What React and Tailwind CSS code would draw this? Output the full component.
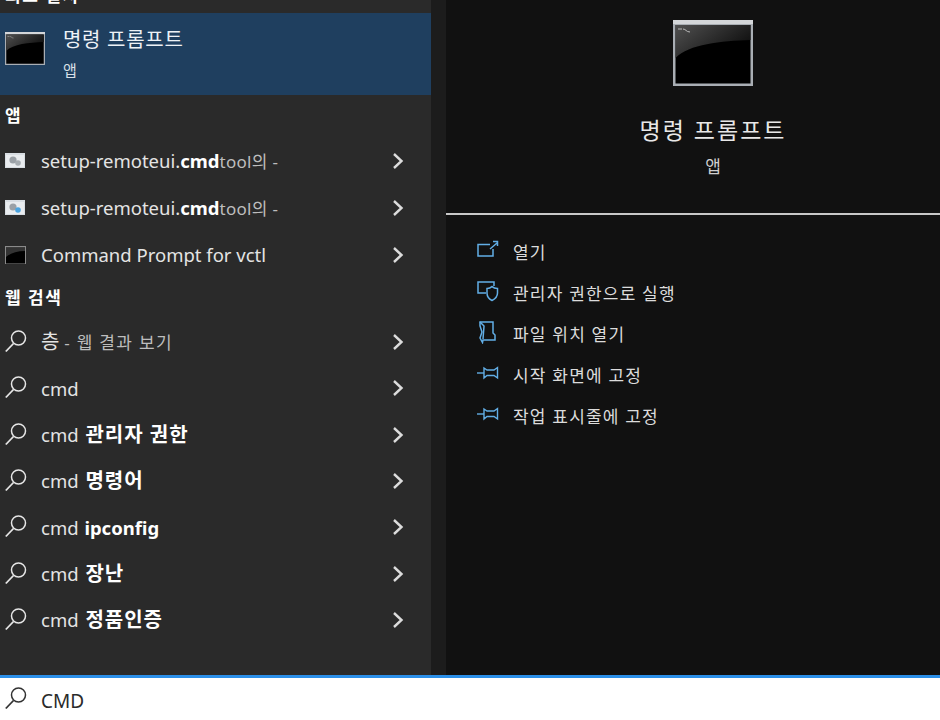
// Windows search panel for "CMD"
const fontStack = { fontFamily: '"Noto Sans", "Noto Sans CJK KR", sans-serif' };

function SearchIcon({ className = 'text-[#e6e6e6]' }) {
    return (
        <svg className={className} width="24" height="24" viewBox="0 0 24 24" fill="none" stroke="currentColor" strokeWidth="1.5">
            <circle cx="13.5" cy="8" r="7" />
            <path d="M8.5 13.5 L0.8 21.5" strokeWidth="1.8" />
        </svg>
    );
}

function Chevron() {
    return (
        <svg className="text-[#dcdcdc]" width="12" height="18" viewBox="0 0 12 18" fill="none" stroke="currentColor" strokeWidth="2.4">
            <path d="M2 2 L9.5 9 L2 16" />
        </svg>
    );
}

// console window icon, used large and small
function ConsoleIcon({ id, width, height }) {
    return (
        <svg width={width} height={height} viewBox="0 0 80 66">
            <defs>
                <linearGradient id={id} x1="0" y1="0" x2="1" y2="0.6">
                    <stop offset="0" stopColor="#505050" />
                    <stop offset="1" stopColor="#0e0e0e" />
                </linearGradient>
            </defs>
            <rect x="0" y="0" width="80" height="66" fill="#a9aeb4" />
            <rect x="0" y="0" width="80" height="4" fill="#d4d6d9" />
            <rect x="2.5" y="5" width="75" height="58.5" fill="#000" />
            <path d="M2.5 5 H77.5 V20 C48 21 16 24 2.5 38 Z" fill={`url(#${id})`} />
            <path d="M5 9 h4 M10 9 c3 0 3 3 7 3" stroke="#bbb" strokeWidth="1" fill="none" />
        </svg>
    );
}

function ToolIcon({ accent }) {
    return (
        <svg width="20" height="16" viewBox="0 0 20 16">
            <rect x="0" y="0" width="20" height="15" fill="#d8dde2" />
            <rect x="1" y="2" width="18" height="12" fill="#e9ecef" />
            <circle cx="8" cy="7" r="3.6" fill="#9aa0a6" />
            <circle cx="13" cy="10" r="2.8" fill={accent ? '#4aa3df' : '#a5abb0'} />
        </svg>
    );
}

function SmallConsole() {
    return (
        <svg width="21" height="18" viewBox="0 0 21 18">
            <rect width="21" height="18" fill="#8a8a8a" />
            <rect x="1" y="1.5" width="19" height="16" fill="#000" />
            <path d="M1 1.5 H20 V5 C12 5 6 7 1 11 Z" fill="#333333" />
        </svg>
    );
}

function Row({ icon, children }) {
    return (
        <div className="h-[46.33px] flex items-center pl-[5px] pr-[27px] text-[18.5px] text-[#e4e4e4]">
            <div className="w-[36px] shrink-0 flex items-center">{icon}</div>
            <div className="flex-1 whitespace-nowrap">{children}</div>
            <Chevron />
        </div>
    );
}

function AppRow({ icon, children }) {
    return (
        <div className="h-[47px] flex items-center pl-[5px] pr-[27px] text-[18.5px] text-[#e4e4e4]">
            <div className="w-[36px] shrink-0 flex items-center">{icon}</div>
            <div className="flex-1 whitespace-nowrap">{children}</div>
            <Chevron />
        </div>
    );
}

function OpenIcon() {
    return (
        <svg width="22" height="20" viewBox="0 0 22 20" fill="none" stroke="currentColor" strokeWidth="1.5">
            <path d="M13 4.5 H1 V16 H16 V9" />
            <path d="M13 9 L20 3 M16 1.5 H20.5 V6" />
        </svg>
    );
}

function ShieldIcon() {
    return (
        <svg width="22" height="22" viewBox="0 0 22 22" fill="none" stroke="currentColor" strokeWidth="1.5">
            <path d="M9 13 H1 V2 H17 V6" />
            <path d="M10 8.5 C12 8.5 13.5 8 15 6.5 C16.5 8 18 8.5 20.5 8.5 V13 C20.5 16.5 18 19 15 20.5 C12 19 10 16.5 10 13 Z" />
        </svg>
    );
}

function FolderIcon() {
    return (
        <svg width="20" height="24" viewBox="0 0 20 24" fill="none" stroke="currentColor" strokeWidth="1.5">
            <path d="M3 2 H16 V13 L18 15 V20 H6 L5.5 22.5 L3 18 L5 12 L3 6 Z" />
            <path d="M3 2 L7 6 L6 19" />
        </svg>
    );
}

function PinIcon() {
    return (
        <svg width="22" height="14" viewBox="0 0 22 14" fill="none" stroke="currentColor" strokeWidth="1.4">
            <path d="M0 7 H7" />
            <path d="M7 2 V12 L10 9.5 H17 L20.5 12 V1.5 L17 4 H10 Z" />
        </svg>
    );
}

function Action({ icon, label }) {
    return (
        <div className="h-[41px] flex items-center pl-[31px] text-[17px] tracking-[1.2px] text-[#dcdcdc]">
            <div className="w-[36px] h-[24px] shrink-0 flex items-center text-[#62aee6] -mt-[6px]">{icon}</div>
            <span>{label}</span>
        </div>
    );
}

const webRows = ['관리자 권한', '명령어', '장난', '정품인증'];

function ToolName() {
    return (
        <>
            setup-remoteui.<b className="text-white">cmd</b>
            <span className="text-[17px] tracking-[0.3px] text-[#bdbdbd]">tool의 -</span>
        </>
    );
}

function WebRow({ label }) {
    return (
        <Row icon={<SearchIcon />}>
            cmd <span className="ml-[2px] text-[20px] font-semibold tracking-[1px] text-white">{label}</span>
        </Row>
    );
}

export default function App() {
    return (
        <div className="w-[940px] h-[720px] flex flex-col overflow-hidden bg-white" style={fontStack}>
            <div className="flex-1 min-h-0 flex">
                {/* results list */}
                <div className="w-[431px] bg-[#2a2a2a] text-white">
                    <div className="h-[13px] overflow-hidden pl-[5px] text-[17px] font-bold leading-[16px] tracking-[1.5px]">
                        <div className="-mt-[12px]">최고 일치</div>
                    </div>
                    <div className="h-[82px] bg-[#1f3f5f] flex pl-[5px]">
                        <div className="w-[58px] shrink-0 pt-[19px]">
                            <ConsoleIcon id="cmdSmall" width={40} height={33} />
                        </div>
                        <div>
                            <div className="text-[20px] leading-[26px] mt-[14px] tracking-[0.7px] text-[#eef2f6]">명령 프롬프트</div>
                            <div className="text-[15px] leading-[20px] mt-[7px] text-[#d8e0e8]">앱</div>
                        </div>
                    </div>
                    <div className="h-[42px] flex items-center pl-[5px] text-[17px] font-bold">앱</div>
                    <AppRow icon={<ToolIcon />}><ToolName /></AppRow>
                    <AppRow icon={<ToolIcon accent />}><ToolName /></AppRow>
                    <AppRow icon={<SmallConsole />}>Command Prompt for vctl</AppRow>
                    <div className="h-[41px] flex items-center pl-[5px] pb-[1px] text-[17px] font-bold tracking-[1.5px]">웹 검색</div>
                    <Row icon={<SearchIcon />}>
                        <span className="text-[20px]">층</span> <span className="text-[17px] tracking-[1.3px] text-[#bdbdbd]">- 웹 결과 보기</span>
                    </Row>
                    <Row icon={<SearchIcon />}>cmd</Row>
                    {webRows.slice(0, 2).map((label) => <WebRow key={label} label={label} />)}
                    <Row icon={<SearchIcon />}>
                        cmd <b className="ml-[1px] text-white">ipconfig</b>
                    </Row>
                    {webRows.slice(2).map((label) => <WebRow key={label} label={label} />)}
                </div>
                <div className="w-[15px] bg-[#1c1c1c]" />
                {/* details pane */}
                <div className="flex-1 bg-[#111111] text-white">
                    <div className="h-[213px] flex flex-col items-center pt-[20px] pl-[40px]">
                        <ConsoleIcon id="cmdLarge" width={80} height={66} />
                        <div className="mt-[29px] text-[23px] leading-[30px] tracking-[2px] text-[#e8e8e8]">명령 프롬프트</div>
                        <div className="mt-[11px] text-[17px] leading-[22px] text-[#d0d0d0]">앱</div>
                    </div>
                    <div className="h-[2px] bg-[#c8c8c8]" />
                    <div className="pt-[17px]">
                        <Action icon={<OpenIcon />} label="열기" />
                        <Action icon={<ShieldIcon />} label="관리자 권한으로 실행" />
                        <Action icon={<FolderIcon />} label="파일 위치 열기" />
                        <Action icon={<PinIcon />} label="시작 화면에 고정" />
                        <Action icon={<PinIcon />} label="작업 표시줄에 고정" />
                    </div>
                </div>
            </div>
            {/* search box */}
            <div className="h-[45px] border-t-[3px] border-[#2b8fe8] bg-white flex items-center pl-[5px] text-[19px] text-[#2a2a2a]">
                <div className="w-[36px] shrink-0 flex items-center"><SearchIcon className="text-[#333333]" /></div>
                <span className="pt-[5px]">CMD</span>
            </div>
        </div>
    );
}
